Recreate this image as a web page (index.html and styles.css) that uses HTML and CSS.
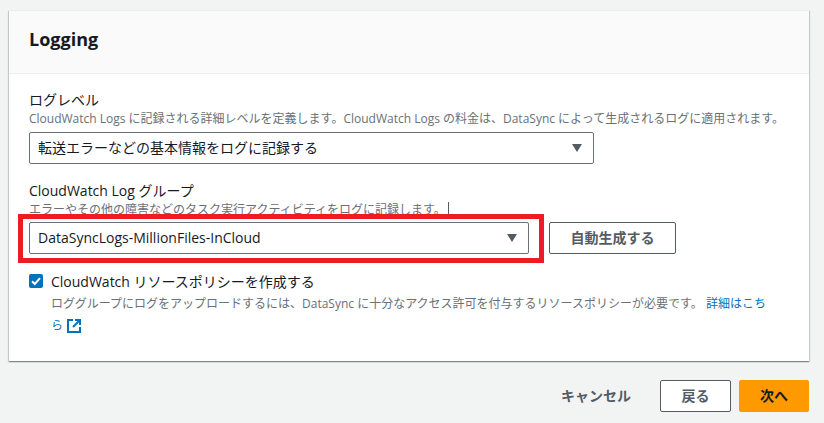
FILE: index.html
```html
<!DOCTYPE html>
<html lang="ja">
<head>
<meta charset="utf-8">
<title>Logging</title>
<link rel="stylesheet" href="styles.css">
</head>
<body>
<section class="card">
  <header class="card-header"><h2>Logging</h2></header>
  <div class="card-body">
    <div class="field">
      <div class="label">ログレベル</div>
      <div class="desc">CloudWatch Logs に記録される詳細レベルを定義します。CloudWatch Logs の料金は、DataSync によって生成されるログに適用されます。</div>
      <div class="select select-wide"><span>転送エラーなどの基本情報をログに記録する</span><i class="caret"></i></div>
    </div>
    <div class="field">
      <div class="label">CloudWatch Log グループ</div>
      <div class="desc desc-tight">エラーやその他の障害などのタスク実行アクティビティをログに記録します。<b class="cursor"></b></div>
      <div class="row">
        <div class="select select-group"><span>DataSyncLogs-MillionFiles-InCloud</span><i class="caret"></i><div class="highlight"></div></div>
        <button class="btn btn-gen">自動生成する</button>
      </div>
    </div>
    <div class="check">
      <svg class="box" width="14" height="14" viewBox="0 0 14 14"><rect width="14" height="14" rx="2" fill="#0073bb"/><path d="M3 7.2l2.8 2.8L11 4.2" fill="none" stroke="#fff" stroke-width="2"/></svg>
      <div class="check-text">
        <div class="check-label">CloudWatch リソースポリシーを作成する</div>
        <div class="check-desc">ロググループにログをアップロードするには、DataSync に十分なアクセス許可を付与するリソースポリシーが必要です。 <a href="#">詳細はこちら <svg class="ext" width="14" height="14" viewBox="0 0 14 14"><path d="M6 1H1v12h12V8" fill="none" stroke="#0073bb" stroke-width="2"/><path d="M8 1h5v5M13 1L6 8" fill="none" stroke="#0073bb" stroke-width="2"/></svg></a></div>
      </div>
    </div>
  </div>
</section>
<footer class="actions">
  <button class="link-btn">キャンセル</button>
  <button class="btn btn-back">戻る</button>
  <button class="btn btn-next">次へ</button>
</footer>
</body>
</html>
```

FILE: styles.css
```css
* { box-sizing: border-box; }
html, body { margin: 0; height: 423px; overflow: hidden; }
body {
  background: #f2f3f3;
  padding: 10px 15px 0 9px;
  font-family: "Open Sans", "Noto Sans CJK JP", sans-serif;
  font-size: 14px;
  color: #16191f;
}
.card {
  height: 351px;
  background: #fff;
  border-top: 1px solid #eaeded;
  box-shadow: 0 1px 1px 0 rgba(0,28,36,.3), 1px 1px 1px 0 rgba(0,28,36,.15), -1px 1px 1px 0 rgba(0,28,36,.15);
}
.card-header {
  height: 63px;
  padding: 15px 20px 0;
  background: #fafafa;
  border-bottom: 1px solid #eaeded;
}
.card-header h2 { margin: 0; font-size: 18px; line-height: 26px; font-weight: 700; }
.card-body { padding: 15px 20px 0; }
.field { margin-bottom: 16px; }
.label { line-height: 21px; height: 21px; }
.desc { font-size: 12px; line-height: 17px; height: 22px; color: #687078; white-space: nowrap; }
.desc-tight { height: 21px; }
.cursor { display: inline-block; width: 1px; height: 13px; background: #545b64; margin-left: 2px; vertical-align: -1px; }
.select {
  height: 32px;
  display: flex;
  align-items: center;
  justify-content: space-between;
  padding: 0 11px 2px 8px;
  border: 1px solid #687078;
  border-radius: 2px;
  background: #fff;
  position: relative;
}
.select-wide { width: 565px; }
.select-group { width: 500px; }
.caret { width: 0; height: 0; margin-top: 2px; border-left: 5.5px solid transparent; border-right: 5.5px solid transparent; border-top: 8px solid #545b64; }
.row { display: flex; gap: 20px; }
.highlight { position: absolute; left: -12px; top: -9px; width: 526px; height: 49px; border: 5px solid #ed1c24; pointer-events: none; }
.btn {
  height: 32px;
  font: 700 14px "Open Sans", "Noto Sans CJK JP", sans-serif;
  border: 1px solid #545b64;
  border-radius: 2px;
  background: #fff;
  color: #545b64;
  padding: 0 0 2px;
}
.btn-gen { width: 127px; }
.btn-back { width: 71px; }
.btn-next { width: 70px; background: #ff9900; border-color: #ff9900; color: #16191f; }
.check { display: flex; gap: 8px; margin-top: 20px; }
.box { flex: none; }
.check-label { line-height: 15px; }
.check-desc { font-size: 12px; line-height: 22px; color: #687078; margin-top: 4px; width: 724px; }
.check-desc a { color: #0073bb; text-decoration: none; }
.ext { vertical-align: -3px; margin-left: 1px; }
.actions { display: flex; justify-content: flex-end; align-items: center; gap: 8px; margin-top: 19px; }
.link-btn { width: 112px; height: 32px; border: 0; background: none; font: 700 14px "Open Sans", "Noto Sans CJK JP", sans-serif; color: #545b64; padding: 0 0 2px; }
```
